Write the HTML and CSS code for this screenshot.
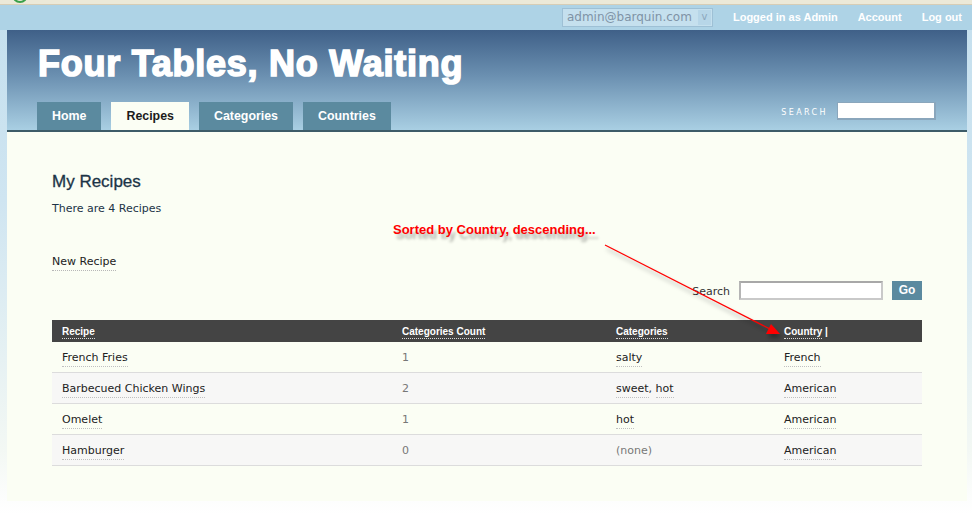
FILE: index.html
```html
<!DOCTYPE html>
<html>
<head>
<meta charset="utf-8">
<title>Four Tables, No Waiting</title>
<link rel="stylesheet" href="styles.css">
</head>
<body>
<div class="chrome"><span class="chrome-icon"></span></div>
<div class="topbar">
  <div class="account-select"><span class="account-value">admin@barquin.com</span><span class="account-arrow">v</span></div>
  <nav class="user-links">
    <a href="#">Logged in as Admin</a>
    <a href="#">Account</a>
    <a href="#">Log out</a>
  </nav>
</div>
<div class="wrap">
  <header class="header">
    <h1 class="site-title">Four Tables, No Waiting</h1>
    <div class="nav-row">
      <ul class="tabs">
        <li class="tab">Home</li>
        <li class="tab active">Recipes</li>
        <li class="tab">Categories</li>
        <li class="tab">Countries</li>
      </ul>
      <div class="site-search">
        <span class="site-search-label">SEARCH</span>
        <span class="site-search-input"></span>
      </div>
    </div>
  </header>
  <main class="content">
    <h2 class="page-title">My Recipes</h2>
    <p class="count">There are 4 Recipes</p>
    <a class="new-link" href="#">New Recipe</a>
    <div class="search-row">
      <span class="search-label">Search</span>
      <span class="search-input"></span>
      <span class="go-btn">Go</span>
    </div>
    <table class="recipes">
      <colgroup>
        <col class="c1"><col class="c2"><col class="c3"><col class="c4">
      </colgroup>
      <thead>
        <tr>
          <th><span class="th-link">Recipe</span></th>
          <th><span class="th-link">Categories Count</span></th>
          <th><span class="th-link">Categories</span></th>
          <th><span class="th-link">Country</span> |</th>
        </tr>
      </thead>
      <tbody>
        <tr>
          <td><span class="lnk">French Fries</span></td>
          <td><span class="val">1</span></td>
          <td><span class="lnk">salty</span></td>
          <td><span class="lnk">French</span></td>
        </tr>
        <tr class="alt">
          <td><span class="lnk">Barbecued Chicken Wings</span></td>
          <td><span class="val">2</span></td>
          <td><span class="lnk">sweet</span>, <span class="lnk">hot</span></td>
          <td><span class="lnk">American</span></td>
        </tr>
        <tr>
          <td><span class="lnk">Omelet</span></td>
          <td><span class="val">1</span></td>
          <td><span class="lnk">hot</span></td>
          <td><span class="lnk">American</span></td>
        </tr>
        <tr class="alt">
          <td><span class="lnk">Hamburger</span></td>
          <td><span class="val">0</span></td>
          <td><span class="val">(none)</span></td>
          <td><span class="lnk">American</span></td>
        </tr>
      </tbody>
    </table>
  </main>
</div>
<div class="note">Sorted by Country, descending...</div>
<svg class="note-arrow" width="972" height="514" viewBox="0 0 972 514">
  <defs>
    <filter id="sh" x="-10%" y="-10%" width="130%" height="140%">
      <feDropShadow dx="2" dy="4" stdDeviation="2" flood-color="#000" flood-opacity="0.35"/>
    </filter>
  </defs>
  <g filter="url(#sh)">
    <line x1="605" y1="245" x2="770" y2="329" stroke="#ff0000" stroke-width="1.2"/>
    <polygon points="780,334 766,334 771,324" fill="#ff0000"/>
  </g>
</svg>
</body>
</html>
```
FILE: styles.css
```css
html, body {
  margin: 0;
  padding: 0;
}
body {
  width: 972px;
  height: 514px;
  overflow: hidden;
  position: relative;
  background: linear-gradient(#c4dfee 0px, #cfe5f1 200px, #f3f8f4 450px, #ffffff 514px);
  font-family: "DejaVu Sans", Verdana, sans-serif;
  font-size: 11px;
  color: #222;
}
a { text-decoration: none; color: inherit; }

.chrome {
  height: 4px;
  background: #ece9d8;
  border-bottom: 1px solid #d6cdb6;
  overflow: hidden;
  padding-left: 12px;
}
.chrome-icon {
  display: block;
  width: 12px;
  height: 12px;
  border: 2px solid #3aa04a;
  border-radius: 50%;
  margin-top: -13px;
}

.topbar {
  height: 25px;
  background: #aed3e6;
  display: flex;
  justify-content: flex-end;
  align-items: center;
  padding-right: 10px;
}
.account-select {
  width: 149px;
  height: 17px;
  border: 1px solid #9ec0d5;
  background: #c5e0ee;
  display: flex;
  align-items: center;
  margin-right: 20px;
}
.account-value {
  flex: 1;
  padding-left: 4px;
  font-size: 12px;
  color: #7f93a6;
  line-height: 17px;
}
.account-arrow {
  width: 13px;
  height: 15px;
  margin-right: 1px;
  background: #b7d6e8;
  color: #8ca7bd;
  font-size: 10px;
  line-height: 14px;
  text-align: center;
}
.user-links {
  display: flex;
  gap: 20px;
  margin-top: -2px;
}
.user-links a {
  font-family: "Liberation Sans", Arial, sans-serif;
  font-weight: bold;
  font-size: 11px;
  color: #ffffff;
}

.wrap {
  margin: 0 5px 0 7px;
  width: 960px;
}
.header {
  height: 100px;
  border-bottom: 2px solid #3d5c68;
  background: linear-gradient(#3f6088 0%, #6a8fb0 45%, #a9cfe3 100%);
  display: flex;
  flex-direction: column;
}
.site-title {
  margin: 0;
  padding: 16px 0 0 31px;
  font-family: "Liberation Sans", Arial, sans-serif;
  font-weight: bold;
  font-size: 36px;
  line-height: 36px;
  letter-spacing: 0.75px;
  color: #ffffff;
  -webkit-text-stroke: 1.6px #ffffff;
}
.nav-row {
  margin-top: auto;
  display: flex;
  justify-content: space-between;
  align-items: flex-start;
  height: 28px;
}
.tabs {
  list-style: none;
  margin: 0 0 0 30px;
  padding: 0;
  display: flex;
  gap: 10px;
}
.tab {
  height: 28px;
  line-height: 29px;
  padding: 0 15px;
  background: #5b8a9f;
  color: #ffffff;
  font-family: "Liberation Sans", Arial, sans-serif;
  font-weight: bold;
  font-size: 12.4px;
}
.tab.active {
  background: #fbfef4;
  color: #1b1b1b;
}
.site-search {
  display: flex;
  align-items: center;
  margin-right: 31px;
}
.site-search-label {
  font-size: 8px;
  letter-spacing: 2.4px;
  color: #ffffff;
  margin-right: 9px;
  padding-top: 3px;
}
.site-search-input {
  display: block;
  width: 96px;
  height: 15px;
  background: #ffffff;
  border: 2px solid #8aa6bc;
  border-width: 1px 2px 2px 1px;
}

.content {
  background: #fbfef4;
  padding: 40px 45px 36px 45px;
  height: 293px;
}
.page-title {
  margin: 0;
  font-family: "Liberation Sans", Arial, sans-serif;
  font-weight: normal;
  font-size: 17px;
  line-height: 20px;
  color: #1c3447;
  -webkit-text-stroke: 0.3px #1c3447;
}
.count {
  margin: 10px 0 0 0;
  line-height: 14px;
  color: #1c3447;
}
.new-link {
  display: inline-block;
  margin-top: 39px;
  line-height: 14px;
  padding-bottom: 1px;
  border-bottom: 1px dotted #b7b7b7;
  color: #222;
}
.search-row {
  margin-top: 10px;
  display: flex;
  justify-content: flex-end;
  align-items: center;
  height: 19px;
}
.search-label {
  color: #333;
  margin-right: 9px;
  padding-top: 2px;
}
.search-input {
  display: block;
  width: 140px;
  height: 15px;
  border: 2px solid #c9c9c9;
  border-top-color: #a8a8a8;
  border-left-color: #b5b5b5;
  background: #ffffff;
  margin-right: 9px;
}
.go-btn {
  display: block;
  width: 30px;
  height: 19px;
  line-height: 19px;
  text-align: center;
  background: #5b8a9f;
  color: #ffffff;
  font-family: "Liberation Sans", Arial, sans-serif;
  font-weight: bold;
  font-size: 12px;
}

.recipes {
  margin-top: 20px;
  width: 870px;
  border-collapse: collapse;
  table-layout: fixed;
}
.c1 { width: 340px; }
.c2 { width: 214px; }
.c3 { width: 168px; }
.c4 { width: 148px; }
.recipes th {
  background: #444444;
  height: 22px;
  padding: 0 10px;
  text-align: left;
  vertical-align: middle;
  font-family: "Liberation Sans", Arial, sans-serif;
  font-weight: bold;
  font-size: 10px;
  color: #ffffff;
  line-height: 12px;
}
.th-link {
  display: inline-block;
  padding-top: 3px;
  border-bottom: 1px dotted #d8d8d8;
}
.recipes td {
  height: 30px;
  padding: 0 10px;
  border-bottom: 1px solid #dcdcdc;
  line-height: 14px;
  vertical-align: middle;
  color: #333;
}
.recipes tr.alt td {
  background: #f7f7f6;
}
.lnk {
  display: inline-block;
  padding-top: 3px;
  padding-bottom: 1px;
  border-bottom: 1px dotted #c0c0c0;
  color: #222;
}
.val {
  display: inline-block;
  padding-top: 3px;
  padding-bottom: 2px;
  color: #777;
}

.note {
  position: absolute;
  left: 393px;
  top: 223px;
  font-family: "Liberation Sans", Arial, sans-serif;
  font-weight: bold;
  font-size: 13px;
  line-height: 14px;
  color: #ff0000;
  text-shadow: 3px 5px 3px rgba(0, 0, 0, 0.3);
}
.note-arrow {
  position: absolute;
  left: 0;
  top: 0;
  pointer-events: none;
}
```
